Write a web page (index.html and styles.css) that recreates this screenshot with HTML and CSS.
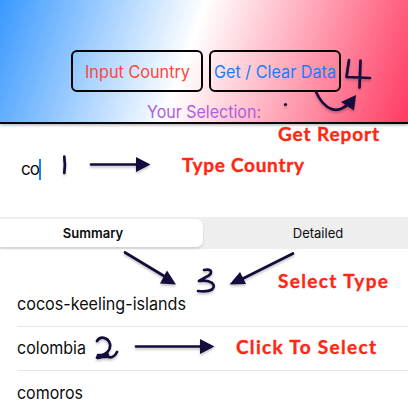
FILE: index.html
```
<!DOCTYPE html>
<html lang="en">
<head>
<meta charset="utf-8">
<title>Country report</title>
<link rel="stylesheet" href="styles.css">
</head>
<body>
<main class="app">
  <header class="header">
    <div class="actions">
      <button class="btn btn-input"><svg width="105" height="24"><text x="0" y="18" textLength="105" lengthAdjust="spacingAndGlyphs">Input Country</text></svg></button>
      <button class="btn btn-data"><svg width="124" height="24"><text x="1" y="18" textLength="122" lengthAdjust="spacingAndGlyphs">Get / Clear Data</text></svg></button>
    </div>
    <div class="selection"><svg width="118" height="22"><text x="2" y="17" textLength="114" lengthAdjust="spacingAndGlyphs">Your Selection:</text></svg></div>
  </header>
  <div class="field"><span>co</span><i class="caret"></i></div>
  <nav class="segments">
    <div class="segment active">Summary</div>
    <div class="segment">Detailed</div>
  </nav>
  <ul class="list">
    <li><svg width="180" height="24"><text x="0" y="18" textLength="169" lengthAdjust="spacingAndGlyphs">cocos-keeling-islands</text></svg></li>
    <li><svg width="180" height="24"><text x="0" y="18" textLength="69" lengthAdjust="spacingAndGlyphs">colombia</text></svg></li>
    <li><svg width="180" height="24"><text x="0" y="18" textLength="66" lengthAdjust="spacingAndGlyphs">comoros</text></svg></li>
  </ul>
  <svg class="notes" width="408" height="400" viewBox="0 0 408 400">
    <g class="ink">
      <path d="M349 60 L346.500 77 Q358 77.500 370 78 M360.500 60.500 L359.500 87.500"/>
      <path d="M316 92 C325 111 338 115 349 103"/>
      <path d="M64.300 156.500 Q65.500 165 64.300 173"/>
      <path d="M91 164.500 H137"/>
      <path d="M125 252.500 L164 276"/>
      <path d="M293 253.500 L242 279"/>
      <path d="M204 270 C213 268 213 274 206 277 L199 281 C211 279 217 285 212 289.500 Q208 292 198 291"/>
      <path d="M97 341 C100 335.500 108 337 110 344 C111 350 106 354 100 356 C94 358 98 359 103 356 C109 352 108 354 108 357 C112 358 115 356 117 352"/>
      <path d="M98 355 H106 V357 H98 Z"/>
      <path d="M136 346.500 H201"/>
    </g>
    <g class="heads">
      <path d="M356 95 L354 110.500 L341 102 Z"/>
      <path d="M150.500 164.500 L136 157 V172 Z"/>
      <path d="M176 284.500 L167 270.500 L160 283.500 Z"/>
      <path d="M229.500 284.500 L240 272 L246 284 Z"/>
      <path d="M214.500 346.500 L200 339 V354 Z"/>
      <circle cx="285.500" cy="104.500" r="1.600"/>
    </g>
    <g class="captions">
      <text x="278" y="141" textLength="101">Get Report</text>
      <text x="182" y="172" textLength="122">Type Country</text>
      <text x="278" y="288" textLength="110">Select Type</text>
      <text x="236" y="354" textLength="140">Click To Select</text>
    </g>
  </svg>
</main>
</body>
</html>
```
FILE: styles.css
```
* { box-sizing: border-box; }
body { margin: 0; background: #fff; color: #0c0c0c; font-family: Inter, "Liberation Sans", sans-serif; font-size: 17px; overflow: hidden; }
.app { position: relative; width: 408px; height: 400px; overflow: hidden; }
.app svg { display: block; flex: none; overflow: visible; }
.header { height: 124px; padding-top: 50px; border-bottom: 2px solid #0b0710; background: linear-gradient(109deg, #3a99ff 0%, #fff 46%, #ff3b62 100%); box-shadow: 0 1px 3px rgba(0, 0, 0, .35); }
.actions { display: flex; gap: 6px; padding-left: 71px; }
.btn { display: flex; align-items: center; justify-content: center; width: 132px; height: 42px; padding: 2px 0 0; border: 2px solid #050505; border-radius: 6px; background: none; font: inherit; }
.btn-input { fill: #ff443e; }
.btn-data { fill: #147efb; }
.selection { display: flex; justify-content: center; padding-top: 9px; fill: #af5ddd; }
.field { display: flex; align-items: center; height: 93px; padding: 0 0 3px 21px; letter-spacing: -.9px; }
.caret { width: 2px; height: 21px; background: #1683f5; }
.segments { display: flex; height: 32px; padding: 2px 0; background: #eee; font-size: 13px; }
.segment { display: flex; flex: none; align-items: center; justify-content: center; width: 230px; }
.segment.active { width: 203px; padding-right: 17px; font-weight: 600; background: #fff; border-radius: 0 7px 7px 0; box-shadow: 0 2px 3px rgba(0, 0, 0, .12); }
.list { margin: 0; padding: 33px 0 0 17px; list-style: none; }
.list li { display: flex; align-items: center; height: 44.5px; border-bottom: 1px solid #e6e6e6; fill: #0c0c0c; }
.notes { position: absolute; inset: 0; }
.ink { fill: none; stroke: #150b3c; stroke-width: 2.7; stroke-linecap: round; stroke-linejoin: round; filter: drop-shadow(0 2px 1px rgba(0, 0, 0, .22)); }
.heads { fill: #150b3c; filter: drop-shadow(0 2px 1px rgba(0, 0, 0, .22)); }
.captions { fill: #ff2713; stroke: #ff2713; stroke-width: .35; stroke-linejoin: round; font: 700 19px "Comic Sans MS", "Chalkboard", Lato, sans-serif; }
```
